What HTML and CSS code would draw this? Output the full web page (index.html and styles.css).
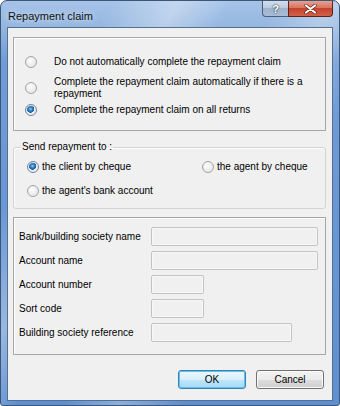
FILE: index.html
```html
<!DOCTYPE html>
<html lang="en">
<head>
    <meta charset="UTF-8">
    <title>Repayment claim</title>
    <link rel="stylesheet" href="styles.css">
</head>
<body>
    <div class="window">
        <div class="titlebar">
            <span class="title">Repayment claim</span>
            <div class="caption-buttons">
                <span class="cap-btn help">?</span>
                <span class="cap-btn close">
                    <svg width="13" height="10" viewBox="0 0 13 10">
                        <path d="M2 1.5 L11 8.5 M11 1.5 L2 8.5" stroke="#5a1b10" stroke-width="3.4" stroke-linecap="round"/>
                        <path d="M2 1.5 L11 8.5 M11 1.5 L2 8.5" stroke="#fff" stroke-width="2.2" stroke-linecap="round"/>
                    </svg>
                </span>
            </div>
        </div>

        <div class="client">
            <div class="panel claim-options">
                <label class="option first">
                    <span class="radio"></span>
                    <span class="option-text">Do not automatically complete the repayment claim</span>
                </label>
                <label class="option second">
                    <span class="radio"></span>
                    <span class="option-text">Complete the repayment claim automatically if there is a<br>repayment</span>
                </label>
                <label class="option">
                    <span class="radio checked"></span>
                    <span class="option-text">Complete the repayment claim on all returns</span>
                </label>
            </div>

            <fieldset class="group">
                <legend>Send repayment to :</legend>
                <div class="send-grid">
                    <label class="send-option">
                        <span class="radio checked"></span>
                        <span>the client by cheque</span>
                    </label>
                    <label class="send-option">
                        <span class="radio"></span>
                        <span>the agent by cheque</span>
                    </label>
                    <label class="send-option">
                        <span class="radio"></span>
                        <span>the agent's bank account</span>
                    </label>
                </div>
            </fieldset>

            <div class="panel bank-details">
                <span class="field-label">Bank/building society name</span>
                <span class="textbox wide"></span>
                <span class="field-label">Account name</span>
                <span class="textbox wide"></span>
                <span class="field-label">Account number</span>
                <span class="textbox short"></span>
                <span class="field-label">Sort code</span>
                <span class="textbox short"></span>
                <span class="field-label">Building society reference</span>
                <span class="textbox medium"></span>
            </div>

            <div class="actions">
                <button class="btn default">OK</button>
                <button class="btn">Cancel</button>
            </div>
        </div>
    </div>
</body>
</html>
```

FILE: styles.css
```css
body {
    margin: 0;
    font-family: "Liberation Sans", Arial, sans-serif;
    font-size: 10px;
    color: #000;
    background: #fff;
}
.window {
    width: 340px;
    height: 406px;
    box-sizing: border-box;
    display: flex;
    flex-direction: column;
    padding: 0 6px 4px 6px;
    border: 1px solid #3b5677;
    border-radius: 7px 7px 3px 3px;
    background:
        linear-gradient(118deg, rgba(255,255,255,0) 20%, rgba(255,255,255,.35) 32%, rgba(255,255,255,0) 42%, rgba(255,255,255,0) 50%, rgba(255,255,255,.28) 60%, rgba(255,255,255,0) 72%),
        linear-gradient(to bottom, #a6c3e8 0, #94b6e0 26px, #6f9dd8 60px, #5f8fd0 100%);
}
.titlebar {
    height: 26px;
    display: flex;
    justify-content: space-between;
    align-items: flex-start;
}
.title {
    font-size: 11px;
    line-height: 12px;
    padding: 9px 0 0 1px;
    color: #111;
    text-shadow: 0 0 6px rgba(255,255,255,.9);
}
.caption-buttons {
    display: flex;
}
.cap-btn {
    height: 16px;
    box-sizing: border-box;
    display: flex;
    align-items: center;
    justify-content: center;
    border: 1px solid #4a5d78;
    border-top: none;
}
.help {
    width: 26px;
    border-right: none;
    border-radius: 0 0 0 4px;
    background: linear-gradient(to bottom, #d3deeb 0, #b9c9dd 50%, #9fb3cc 50%, #aabdd5 100%);
    color: #fff;
    font-weight: bold;
    font-size: 11px;
    text-shadow: 0 0 2px #2b3a50, 0 0 1px #2b3a50;
}
.close {
    width: 45px;
    border-color: #5e2318;
    border-radius: 0 0 4px 0;
    background: linear-gradient(to bottom, #e6a291 0, #d67461 45%, #c4432c 50%, #d4614a 100%);
}
.client {
    flex: 1;
    background: #f0f0f0;
    border: 1px solid #566f8f;
    display: flex;
    flex-direction: column;
}
.panel {
    margin: 9px 6px 0 5px;
    border: 1px solid #a6a6a6;
    box-shadow: inset 1px 1px 0 #fff;
}
.claim-options {
    height: 94px;
    box-sizing: border-box;
    padding: 18px 0 0 11px;
    display: flex;
    flex-direction: column;
}
.option {
    display: flex;
    align-items: center;
    gap: 17px;
    line-height: 12px;
}
.option.first {
    margin-bottom: 8px;
}
.option.second {
    margin-bottom: 4px;
}
.radio {
    width: 12px;
    height: 12px;
    box-sizing: border-box;
    flex: none;
    border-radius: 50%;
    border: 1px solid #a4a4a4;
    background: radial-gradient(circle at 40% 35%, #fff 0, #f2f2f2 40%, #d9d9d9 100%);
    box-shadow: inset 0 0 0 1px #ececec;
}
.radio.checked {
    border-color: #6a86a6;
    background:
        radial-gradient(circle at 45% 40%, #a9dcf7 0, #3e8ed0 1.5px, #1c5a9a 3.5px, rgba(0,0,0,0) 4px),
        radial-gradient(circle, #fff 0, #e4e4e4 100%);
}
.group {
    margin: 10px 6px 0 5px;
    padding: 8px 0 11px 13px;
    border: 1px solid #d3d3d3;
    border-radius: 3px;
    box-shadow: inset 1px 1px 0 #fff;
    min-width: 0;
}
.group legend {
    padding: 0 1px;
    margin-left: -6px;
    line-height: 12px;
}
.send-grid {
    display: grid;
    grid-template-columns: 175px auto;
    row-gap: 12px;
}
.send-option {
    display: flex;
    align-items: center;
    gap: 3px;
    line-height: 12px;
}
.bank-details {
    margin-top: 8px;
    padding: 9px 0 12px 5px;
    display: grid;
    grid-template-columns: 132px auto;
    grid-auto-rows: 19px;
    row-gap: 5px;
    align-items: center;
}
.field-label {
    line-height: 12px;
}
.textbox {
    height: 19px;
    box-sizing: border-box;
    border: 1px solid #c3c3c3;
    border-radius: 2px;
    background: #f0f0f0;
    box-shadow: inset 0 0 0 1px #f8f8f8;
}
.textbox.wide {
    width: 167px;
}
.textbox.short {
    width: 53px;
}
.textbox.medium {
    width: 141px;
}
.actions {
    margin-top: 15px;
    padding-right: 8px;
    display: flex;
    justify-content: flex-end;
    gap: 10px;
}
.btn {
    width: 68px;
    height: 19px;
    padding: 0;
    font-family: inherit;
    font-size: 10px;
    color: #000;
    border: 1px solid #707070;
    border-radius: 3px;
    background: linear-gradient(to bottom, #f2f2f2 0, #ebebeb 50%, #dddddd 50%, #cfcfcf 100%);
    box-shadow: inset 0 0 0 1px #fbfbfb;
}
.btn.default {
    border-color: #3c7fb1;
    background: linear-gradient(to bottom, #eaf6fd 0, #d9f0fc 50%, #bee6fd 50%, #a7d9f5 100%);
    box-shadow: inset 0 0 0 1px #5ec2ef;
}
```
